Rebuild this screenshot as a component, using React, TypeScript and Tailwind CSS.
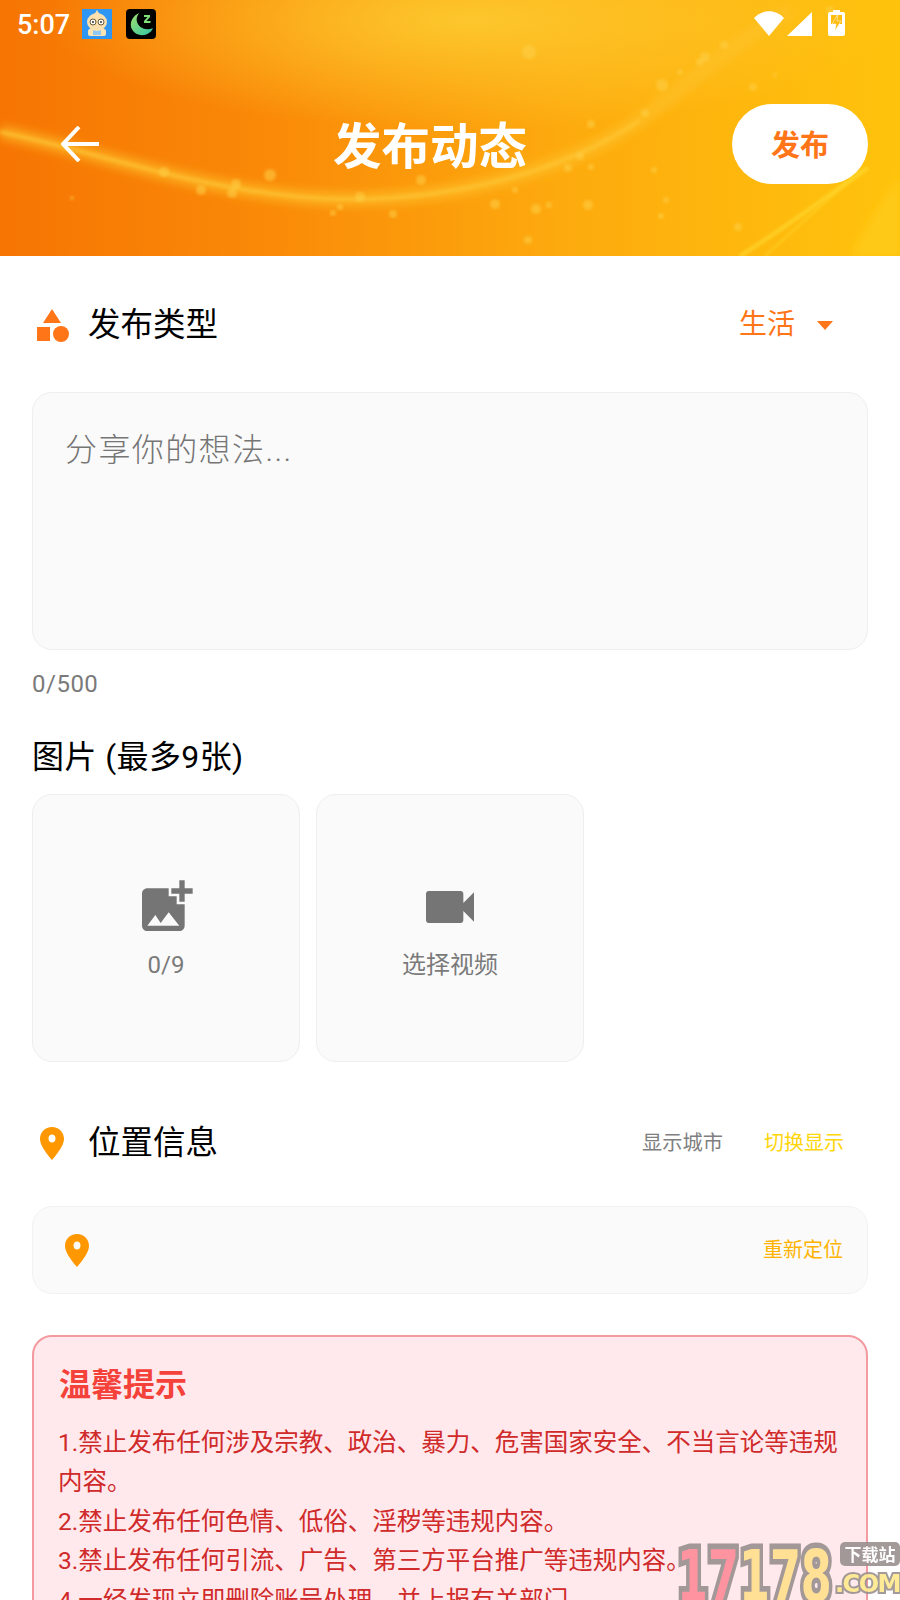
const DOTS: [number, number, number][] = [
  [529, 52, 7], [662, 85, 6], [705, 57, 5], [724, 45, 4], [753, 87, 4], [645, 113, 4], [591, 124, 4],
  [580, 156, 4], [568, 168, 4], [591, 167, 3], [654, 170, 3], [270, 175, 6], [236, 184, 5], [201, 190, 5],
  [232, 193, 5], [164, 172, 5], [360, 197, 5], [421, 180, 5], [495, 204, 5], [536, 209, 5], [549, 205, 3],
  [588, 205, 5], [393, 214, 4], [333, 213, 3], [340, 207, 3], [528, 240, 4], [738, 227, 4], [666, 200, 3],
  [661, 216, 3], [515, 190, 3], [72, 198, 2], [830, 10, 4], [700, 62, 4], [680, 72, 3], [775, 75, 2],
];

function HeaderArt() {
  return (
    <svg className="absolute inset-0 h-full w-full" viewBox="0 0 900 256" preserveAspectRatio="none">
      <defs>
        <linearGradient id="base" x1="0" y1="0" x2="1" y2="0">
          <stop offset="0" stopColor="#f67503" />
          <stop offset="0.3" stopColor="#fa8a08" />
          <stop offset="0.62" stopColor="#fdaa0e" />
          <stop offset="1" stopColor="#ffc30c" />
        </linearGradient>
        <radialGradient id="glow" cx="0.5" cy="0.5" r="0.5">
          <stop offset="0" stopColor="#fdc92e" stopOpacity="0.95" />
          <stop offset="1" stopColor="#fdc92e" stopOpacity="0" />
        </radialGradient>
        <filter id="soft">
          <feGaussianBlur stdDeviation="5" />
        </filter>
        <filter id="softer">
          <feGaussianBlur stdDeviation="1.5" />
        </filter>
      </defs>
      <rect width="900" height="256" fill="url(#base)" />
      <ellipse cx="470" cy="20" rx="420" ry="110" fill="url(#glow)" />
      <path d="M0 132 C90 150 180 185 300 197 C430 208 560 175 640 120 C690 85 730 45 790 10" fill="none" stroke="#fdc02a" strokeOpacity="0.7" strokeWidth="13" filter="url(#soft)" />
      <path d="M0 132 C90 150 180 185 300 197 C430 208 560 175 640 120" fill="none" stroke="#fdc838" strokeOpacity="0.55" strokeWidth="4" filter="url(#softer)" />
      <path d="M740 256 C790 225 835 190 868 168" fill="none" stroke="#ffd92e" strokeWidth="4" strokeOpacity="0.7" filter="url(#softer)" />
      <path d="M765 256 C800 225 832 195 862 170" fill="none" stroke="#ffd92e" strokeWidth="2" strokeOpacity="0.6" filter="url(#softer)" />
      <path d="M850 256 C865 230 882 200 900 175 L900 256 Z" fill="#ffd21f" fillOpacity="0.5" filter="url(#soft)" />
      {DOTS.map(([cx, cy, r]) => (
        <circle key={`${cx}-${cy}`} cx={cx} cy={cy} r={r} fill="#fdcf48" fillOpacity="0.55" filter="url(#softer)" />
      ))}
    </svg>
  );
}

function BunIcon() {
  return (
    <svg className="h-[30px] w-[30px]" viewBox="0 0 30 30">
      <rect width="30" height="30" fill="#2f96f3" />
      <rect x="6" y="20" width="18" height="7" rx="2" fill="#fbe3b4" />
      <rect x="11" y="21" width="8" height="5" fill="#8fc7f5" />
      <ellipse cx="15" cy="13" rx="10" ry="9" fill="#fbe0ad" />
      <path d="M15 1 L18 6 H12 Z" fill="#fbe0ad" />
      <circle cx="11" cy="13" r="3" fill="#fff" stroke="#6b5a3a" />
      <circle cx="19" cy="13" r="3" fill="#fff" stroke="#6b5a3a" />
      <circle cx="11" cy="13" r="1" fill="#3b3020" />
      <circle cx="19" cy="13" r="1" fill="#3b3020" />
    </svg>
  );
}

function MoonIcon() {
  return (
    <svg className="h-[30px] w-[30px]" viewBox="0 0 30 30">
      <defs>
        <linearGradient id="moon" x1="0" y1="0" x2="1" y2="1">
          <stop offset="0" stopColor="#a3e26a" />
          <stop offset="1" stopColor="#2ec4a8" />
        </linearGradient>
      </defs>
      <rect width="30" height="30" rx="4" fill="#000" />
      <path d="M13 4 C7 7 4 12 5 18 C7 25 16 29 23 24 C25 23 26 21 27 19 C20 22 13 19 11 13 C10 10 11 7 13 4 Z" fill="url(#moon)" />
      <path d="M18 6 H24 V8 L20.5 12 H24.5 V14 H18 V12 L21.5 8 H18 Z" fill="#7fe07a" />
    </svg>
  );
}

function StatusIcons() {
  return (
    <div className="mr-[55px] flex items-start gap-[3px]">
      <svg className="mt-[11px] h-[25px] w-[30px]" viewBox="0 0 30 25">
        <path d="M0 7 C8 -2 22 -2 30 7 L15 25 Z" fill="#fff" />
      </svg>
      <svg className="mt-[12px] h-[24px] w-[25px]" viewBox="0 0 25 24">
        <path d="M25 0 V24 H0 Z" fill="#fff" />
      </svg>
      <svg className="ml-[13px] mt-[10px] h-[26px] w-[17px]" viewBox="0 0 17 26">
        <path d="M5 0 H12 V2 H15 Q17 2 17 4 V24 Q17 26 15 26 H2 Q0 26 0 24 V4 Q0 2 2 2 H5 Z" fill="#fff" />
        <rect x="3" y="5" width="11" height="9" fill="#ffbd10" />
        <path d="M10 4 L4 14 H8 L7 21 L13 11 H9 Z" fill="#ffbd10" stroke="#fff" strokeWidth="0.5" />
      </svg>
    </div>
  );
}

function PinIcon() {
  return (
    <svg className="h-[33px] w-[24px]" viewBox="0 0 24 33">
      <path
        fillRule="evenodd"
        d="M12 0 C5 0 0 5 0 12 C0 20 12 33 12 33 C12 33 24 20 24 12 C24 5 19 0 12 0 Z M12 7.5 C14 7.5 15.5 9 15.5 11.5 C15.5 14 14 15.5 12 15.5 C10 15.5 8.5 14 8.5 11.5 C8.5 9 10 7.5 12 7.5 Z"
        fill="#ff9800"
      />
    </svg>
  );
}

function Watermark() {
  return (
    <div className="pointer-events-none absolute left-[677px] top-[1540px] h-[60px] w-[223px] font-['DejaVu_Sans',sans-serif] font-bold opacity-90">
      <div className="absolute left-0 top-[-8px] flex origin-top scale-y-[1.6] text-[44.5px] leading-[56px] [paint-order:stroke] [-webkit-text-stroke:7px_#9a9090]">
        <span className="text-[#ff8b98]">17</span>
        <span className="text-[#ffe08c]">178</span>
      </div>
      <div className="absolute right-0 top-[2px] flex h-[24px] w-[60px] items-center justify-center rounded-[5px] bg-[#9a9090] font-['Noto_Sans_CJK_SC',sans-serif] text-[17px] text-white">
        下载站
      </div>
      <div className="absolute right-0 top-[27px] text-[24px] leading-[34px] tracking-[-1.5px] text-[#ffe98c] [paint-order:stroke] [-webkit-text-stroke:4px_#9a9090]">
        .COM
      </div>
    </div>
  );
}

export default function App() {
  return (
    <div className="relative h-[1600px] w-[900px] overflow-hidden bg-white font-['Roboto','Noto_Sans_CJK_SC',sans-serif] text-black">
      <header className="relative h-[256px] overflow-hidden">
        <HeaderArt />
        <div className="relative flex h-[48px] items-start justify-between">
          <div className="flex items-start">
            <span className="ml-[17px] mt-[7px] text-[27px] font-medium leading-[36px] text-white">5:07</span>
            <div className="ml-[12px] mt-[9px]">
              <BunIcon />
            </div>
            <div className="ml-[14px] mt-[9px]">
              <MoonIcon />
            </div>
          </div>
          <StatusIcons />
        </div>
        <div className="relative mt-[56px] flex h-[80px] items-center pl-[61px] pr-[32px]">
          <svg className="h-[36px] w-[38px]" viewBox="0 0 38 36" fill="none" stroke="#fff" strokeWidth="4">
            <path d="M38 18 H3 M18 1 L2 18 L18 35" />
          </svg>
          <h1 className="ml-[234px] pt-[8px] text-[48.5px] font-bold leading-none text-white">发布动态</h1>
          <button className="ml-auto h-[80px] w-[136px] rounded-full bg-white pt-[6px] text-[29px] font-bold text-[#ff7518]">发布</button>
        </div>
      </header>

      <main className="px-[32px]">
        <div className="mt-[37px] flex h-[64px] items-center">
          <svg className="ml-[5px] h-[33px] w-[33px]" viewBox="0 0 33 33">
            <path d="M15 0 L24 14 H6 Z" fill="#ff7518" />
            <rect x="0" y="18" width="13" height="14" fill="#ff7518" />
            <circle cx="24" cy="25" r="8" fill="#ff7518" />
          </svg>
          <span className="ml-[18px] text-[32.5px] leading-none">发布类型</span>
          <span className="ml-auto text-[28px] text-[#ff7518]">生活</span>
          <svg className="ml-[22px] mr-[35px] h-[9px] w-[16px]" viewBox="0 0 16 9">
            <path d="M0 0 H16 L8 9 Z" fill="#ff7518" />
          </svg>
        </div>

        <textarea
          readOnly
          placeholder="分享你的想法..."
          className="mt-[35px] block h-[258px] w-full resize-none rounded-[20px] border border-[#eeeeee] bg-[#fafafa] px-[32px] py-[33px] text-[32px] font-light leading-[48px] tracking-[1.4px] placeholder:text-[#757575]"
        />
        <p className="mt-[17px] text-[24px] leading-[34px] tracking-[0.5px] text-[#7a7a7a]">0/500</p>

        <h2 className="mt-[34px] text-[32px] font-normal leading-[44px] tracking-[0.4px]">图片 (最多9张)</h2>
        <div className="mt-[15px] flex gap-[16px]">
          <div className="flex h-[268px] w-[268px] flex-col items-center justify-center gap-[9px] rounded-[20px] border border-[#eeeeee] bg-[#fafafa]">
            <svg className="h-[64px] w-[64px]" viewBox="0 0 24 24">
              <path
                d="M19 7v2.99s-1.99.01-2 0V7h-3s.01-1.99 0-2h3V2h2v3h3v2h-3zm-3 4V8h-3V5H5c-1.1 0-2 .9-2 2v12c0 1.1.9 2 2 2h12c1.1 0 2-.9 2-2v-8h-3zM5 19l3-4 2 3 3-4 4 5H5z"
                fill="#757575"
              />
            </svg>
            <span className="text-[24px] leading-[34px] text-[#7a7a7a]">0/9</span>
          </div>
          <div className="flex h-[268px] w-[268px] flex-col items-center justify-center gap-[9px] rounded-[20px] border border-[#eeeeee] bg-[#fafafa]">
            <svg className="h-[64px] w-[64px]" viewBox="0 0 24 24">
              <path
                d="M17 10.5V7c0-.55-.45-1-1-1H4c-.55 0-1 .45-1 1v10c0 .55.45 1 1 1h12c.55 0 1-.45 1-1v-3.5l4 4v-11l-4 4z"
                fill="#757575"
              />
            </svg>
            <span className="text-[24px] leading-[34px] text-[#7a7a7a]">选择视频</span>
          </div>
        </div>

        <div className="mt-[49px] flex h-[64px] items-center">
          <div className="ml-[8px]">
            <PinIcon />
          </div>
          <span className="ml-[24px] text-[32.5px] leading-none">位置信息</span>
          <span className="ml-auto text-[20.25px] text-[#7f7f7f]">显示城市</span>
          <span className="ml-[41px] mr-[24px] text-[20px] text-[#ffd60a]">切换显示</span>
        </div>

        <div className="mt-[31px] flex h-[88px] items-center rounded-[20px] border border-[#f2f2f2] bg-[#fafafa] pl-[32px] pr-[24px]">
          <PinIcon />
          <span className="ml-auto text-[20px] text-[#ffb300]">重新定位</span>
        </div>

        <section className="mt-[41px] rounded-[20px] border-2 border-[#f29a9f] bg-[#ffe9ec] px-[24px] pt-[25px]">
          <h3 className="pl-[1px] text-[32px] font-bold leading-[46px] text-[#f4413a]">温馨提示</h3>
          <p className="mt-[15px] text-[24.5px] leading-[39.4px] text-[#d02a2a]">
            1.禁止发布任何涉及宗教、政治、暴力、危害国家安全、不当言论等违规内容。
            <br />
            2.禁止发布任何色情、低俗、淫秽等违规内容。
            <br />
            3.禁止发布任何引流、广告、第三方平台推广等违规内容。
            <br />
            4.一经发现立即删除账号处理，并上报有关部门。
          </p>
        </section>
      </main>

      <Watermark />
    </div>
  );
}
